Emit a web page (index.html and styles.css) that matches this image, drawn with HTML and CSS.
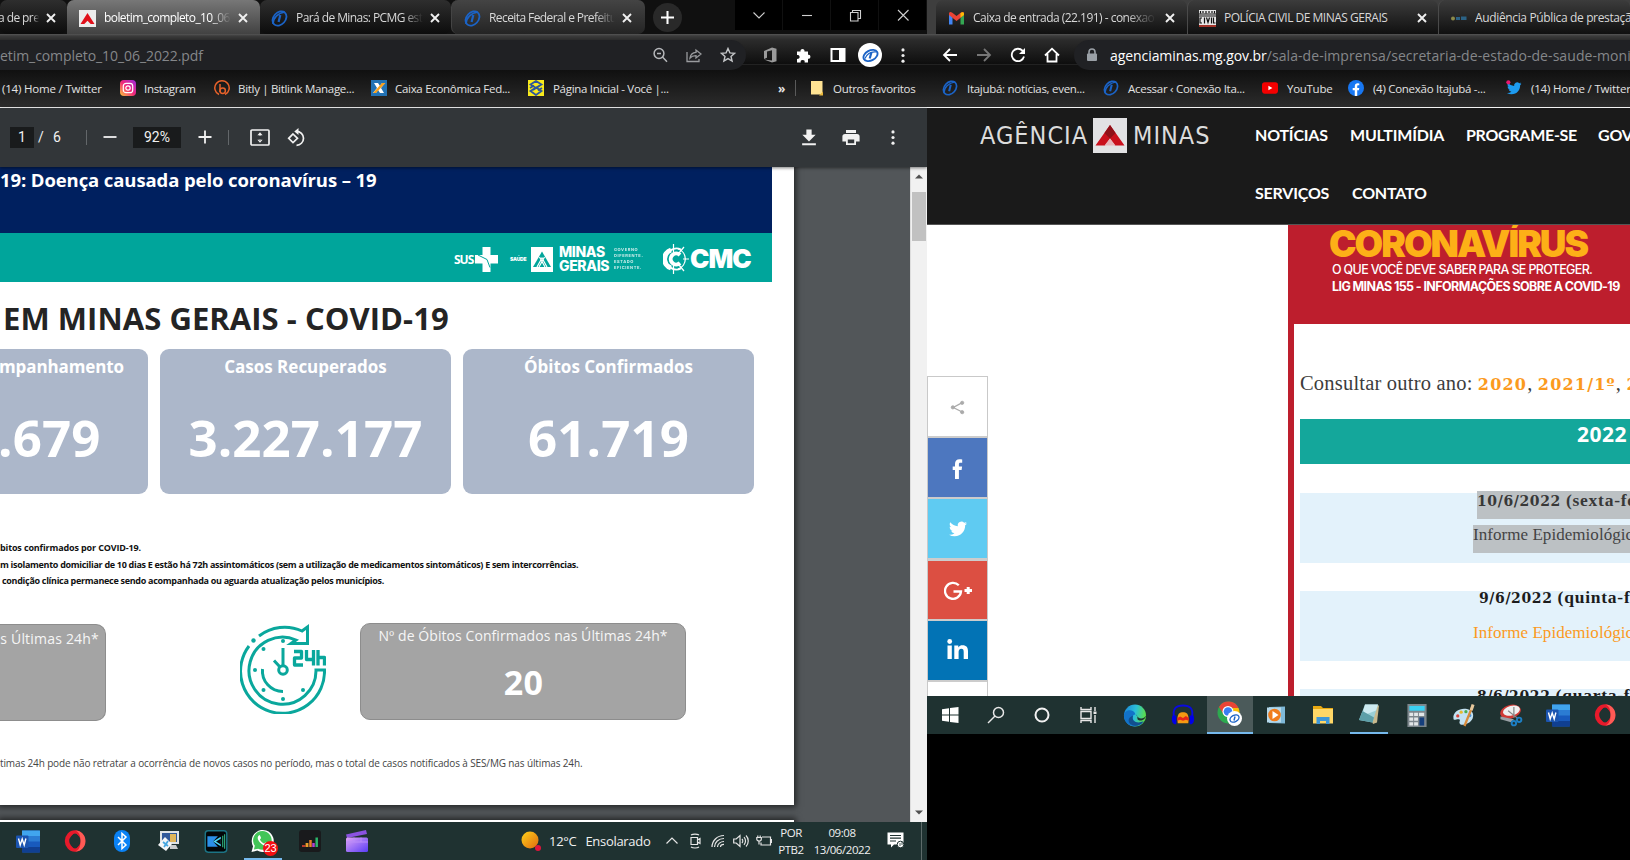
FILE: index.html
```html
<!DOCTYPE html>
<html lang="pt-BR">
<head>
<meta charset="utf-8">
<title>Boletim COVID-19</title>
<link rel="stylesheet" href="styles.css">
</head>
<body>
<svg class="sprite" aria-hidden="true">
  <symbol id="close" viewBox="0 0 10 10"><path d="M1 1l8 8M9 1l-8 8" stroke="currentColor" stroke-width="1.9" fill="none"/></symbol>
  <symbol id="conexao" viewBox="0 0 17 17"><g fill="none" stroke="#1b63c6"><ellipse cx="8.5" cy="8.5" rx="8" ry="6" transform="rotate(-48 8.5 8.5)" stroke-width="1.8"/><path d="M2 14C2 8 7 3 14 2" stroke-width="1.500"/><path d="M9.300 5L7.600 12" stroke-width="2.200"/></g></symbol>
  <symbol id="dots" viewBox="0 0 4 16"><circle cx="2" cy="2" r="1.700"/><circle cx="2" cy="8" r="1.700"/><circle cx="2" cy="14" r="1.700"/></symbol>
  <symbol id="bird" viewBox="0 0 24 24"><path d="M23.950 4.570a10 10 0 0 1-2.820.780 4.950 4.950 0 0 0 2.160-2.730c-.950.560-2 .960-3.120 1.190a4.920 4.920 0 0 0-8.390 4.480C7.690 8.100 4.070 6.130 1.640 3.160a4.820 4.820 0 0 0-.670 2.480c0 1.710.870 3.210 2.190 4.100a4.900 4.900 0 0 1-2.230-.620v.060a4.920 4.920 0 0 0 3.950 4.830 5 5 0 0 1-2.210.080 4.940 4.940 0 0 0 4.600 3.420A9.870 9.870 0 0 1 0 19.540a14 14 0 0 0 7.550 2.210c9.050 0 14-7.500 14-13.990 0-.210 0-.420-.020-.630a9.940 9.940 0 0 0 2.460-2.550z"/></symbol>
  <symbol id="word" viewBox="0 0 24 22"><rect x="6" y="0" width="18" height="22" rx="1" fill="#185abd"/><path d="M6 0h18v6H6z" fill="#41a5ee"/><path d="M6 5.500h18V11H6z" fill="#2b7cd3"/><path d="M6 16.500h18V22H6z" fill="#103f91"/><rect y="5" width="12.500" height="12.500" rx="1" fill="#1b54b0"/><path d="M2.500 8l1.700 6.500L6.200 8.500l2 6L9.900 8" fill="none" stroke="#fff" stroke-width="1.400"/></symbol>
  <symbol id="opera" viewBox="0 0 22 22"><ellipse cx="11" cy="11" rx="8" ry="8.600" fill="none" stroke="#e81a2b" stroke-width="4.400"/><path d="M11 .5c6 0 10.500 4.500 10.500 10.500S17 21.500 11 21.500c4-1 5.500-5 5.500-10.500S15 1.500 11 .5z" fill="#ff5a55"/><ellipse cx="11" cy="11" rx="4.500" ry="7.600" fill="#1f3231"/></symbol>
</svg>

<div class="desktop">
<section class="window left">
  <header class="tabs tabs-left">
    <div class="tab t0"><span class="label fade">a de pre</span><svg class="x"><use href="#close"/></svg></div>
    <div class="tab t1 active">
      <svg class="i17" viewBox="0 0 17 17"><path d="M0 0h17v17H0z" fill="#ececec"/><path d="M8.500 3L1.500 14h3.800l3.200-3.200 3.200 3.200h3.800z" fill="#e0101a"/></svg>
      <span class="label fade">boletim_completo_10_06</span><svg class="x"><use href="#close"/></svg></div>
    <div class="tab t2"><svg class="i17"><use href="#conexao"/></svg><span class="label fade">Pará de Minas: PCMG est</span><svg class="x"><use href="#close"/></svg></div>
    <div class="tab t3"><svg class="i17"><use href="#conexao"/></svg><span class="label fade">Receita Federal e Prefeitu</span><svg class="x"><use href="#close"/></svg></div>
    <div class="newtab"><svg viewBox="0 0 14 14"><path d="M7 0v14M0 7h14" stroke="#fff" stroke-width="2.200"/></svg></div>
    <div class="winbtns">
      <i><svg viewBox="0 0 14 14"><path d="M1.500 4.500L7 10l5.500-5.500"/></svg></i>
      <i><svg viewBox="0 0 14 14"><path d="M2 7.500h10"/></svg></i>
      <i><svg viewBox="0 0 14 14"><path d="M2.500 4.500h7.500V13H2.500zM4.500 4.500v-2h8v8H10"/></svg></i>
      <i><svg viewBox="0 0 14 14"><path d="M2 2l10.500 10.500M12.500 2L2 12.500"/></svg></i>
    </div>
  </header>
  <div class="toolbar tb-left">
    <div class="omni omni-left"><span class="url">etim_completo_10_06_2022.pdf</span>
      <svg class="oi" viewBox="0 0 16 16"><g fill="none" stroke="#b5b7ba" stroke-width="1.500"><circle cx="7" cy="6.500" r="4.900"/><path d="M10.500 10L15 14.700M5 6.500h4"/></g></svg>
      <svg class="oi" viewBox="0 0 16 16"><g fill="none" stroke="#9a9c9f" stroke-width="1.300"><path d="M1 5v9.500h12V12M4 11c.5-4 3-5.500 6-5.700V3l5 4-5 4V8.700C7.500 8.700 5.500 9.200 4 11z"/></g></svg>
      <svg class="oi" viewBox="0 0 16 16"><path d="M8 1.500l1.900 4.400 4.700.4-3.600 3.100 1.100 4.700L8 11.600l-4.100 2.500L5 9.400 1.400 6.300l4.700-.4z" fill="none" stroke="#c4c6c8" stroke-width="1.400"/></svg>
    </div>
    <div class="ext">
      <svg viewBox="0 0 16 16"><path d="M10 .5l4.500 1.300v12.400L10 15.500 2 12.600l8 .9V3.300L5 4.500v6.200L2 12V4z" fill="#9a9a9a"/></svg>
      <svg viewBox="0 0 16 16"><path d="M1 4.500h3.600a2 2 0 1 1 3.800 0H12v3.300a2 2 0 1 1 0 3.900V15.500H8.600a2 2 0 1 0-3.900 0H1V11.800a2 2 0 1 0 0-3.800z" fill="#fff"/></svg>
      <svg viewBox="0 0 16 16"><path d="M.5 1h15v14H.5zM2.500 3v10H9V3z" fill="#fff" fill-rule="evenodd"/></svg>
      <span class="avatar"><svg viewBox="0 0 17 17"><g fill="none" stroke="#1b63c6"><ellipse cx="8.500" cy="8.500" rx="7.500" ry="5" transform="rotate(-28 8.500 8.500)" stroke-width="1.900"/><path d="M9.400 5.500l-1.700 6" stroke-width="2.200"/><path d="M3 11.500C5 7 9 4.500 14 5" stroke-width="1.200"/></g></svg></span>
      <svg class="kebab" fill="#eee"><use href="#dots"/></svg>
    </div>
  </div>
  <nav class="marks marks-left">
    <span class="first">(14) Home / Twitter</span>
    <svg viewBox="0 0 16 16"><defs><linearGradient id="ig" x1="1" y1="0" x2="0" y2="1"><stop offset="0" stop-color="#9b2be0"/><stop offset=".5" stop-color="#f0267a"/><stop offset="1" stop-color="#ffc83a"/></linearGradient></defs><rect width="16" height="16" rx="4" fill="url(#ig)"/><rect x="3.300" y="3.300" width="9.400" height="9.400" rx="2.800" fill="none" stroke="#fff" stroke-width="1.200"/><circle cx="8" cy="8" r="2.200" fill="none" stroke="#fff" stroke-width="1.200"/></svg>
    <span>Instagram</span>
    <svg viewBox="0 0 16 16"><g fill="none" stroke="#e8622a" stroke-width="1.500"><path d="M5 14.500A7.200 7.200 0 1 1 11 14.500"/><path d="M6 4v8"/><circle cx="8.700" cy="10.800" r="2.700"/></g></svg>
    <span>Bitly | Bitlink Manage...</span>
    <svg viewBox="0 0 16 16"><path d="M0 0h16v16H0z" fill="#2272b4"/><path d="M3 3h4l2 3 2-3h3l-4 5 3 5h-4L7 10l-2 3H2l4-5z" fill="#fff"/><path d="M11 3h3.500L5 13H2z" fill="#f5a01e"/></svg>
    <span>Caixa Econômica Fed...</span>
    <svg viewBox="0 0 16 16"><path d="M0 0h16v16H0z" fill="#f8ea1c"/><path d="M8 1l5.500 3.500L8 8 2.500 4.500zM2.500 11L8 7.500l5.500 3.500L8 15z" fill="none" stroke="#2c559c" stroke-width="1.800"/><path d="M2 8l4-2.500M14 8l-4 2.500M5 10l6-4" stroke="#2c559c" stroke-width="1.800"/></svg>
    <span>Página Inicial - Você |...</span>
    <b>»</b>
    <i class="sep"></i>
    <svg viewBox="0 0 14 16"><path d="M1 1h11.500v13.500H1z" fill="#ffe393"/><path d="M9 15.500l4-4v4z" fill="#e8b73c"/></svg>
    <span>Outros favoritos</span>
  </nav>

  <div class="pdfbar">
    <span class="box">1</span><span>/</span><span>6</span><i class="sep"></i>
    <svg viewBox="0 0 16 16"><path d="M1.500 8h13" stroke="#f1f1f1" stroke-width="1.800"/></svg>
    <span class="box zoomval">92%</span>
    <svg viewBox="0 0 16 16"><path d="M1.500 8h13M8 1.500v13" stroke="#f1f1f1" stroke-width="1.800"/></svg>
    <i class="sep"></i>
    <svg viewBox="0 0 20 18"><rect x="1" y="1.500" width="18" height="15" rx="1" fill="none" stroke="#f1f1f1" stroke-width="1.700"/><path d="M10 3.800l2.600 3H7.400zM10 14.200l2.600-3H7.400zM9.400 6h1.200v1.300H9.400zM9.400 10.700h1.200V12H9.400z" fill="#f1f1f1"/></svg>
    <svg viewBox="0 0 19 19"><g fill="none" stroke="#f1f1f1" stroke-width="1.700"><path d="M5.500 6L10 10.300 5.500 14.600 1.200 10.300z"/><path d="M9 3.300a7 7 0 1 1 0 14"/></g><path d="M6.800 3.400L11 0v7z" fill="#f1f1f1"/></svg>
    <em></em>
    <svg viewBox="0 0 16 18"><path d="M5.500 1.500h5v5h3.800L8 12.700 1.700 6.500h3.800zM1.500 14.500h13v1.800h-13z" fill="#f1f1f1"/></svg>
    <svg viewBox="0 0 18 18"><path d="M4 1.500h10v3H4zM3 5.500h12a2.600 2.600 0 0 1 2.600 2.600v5H14v3.400H4v-3.400H.4v-5A2.600 2.600 0 0 1 3 5.500zM5.800 11v3.800h6.400V11z" fill="#f1f1f1" fill-rule="evenodd"/></svg>
    <svg class="kebab" fill="#f1f1f1"><use href="#dots"/></svg>
  </div>

  <div class="viewer">
    <div class="pages">
      <article class="page">
        <div class="navy">19: Doença causada pelo coronavírus – 19</div>
        <div class="teal">
          <span class="sus">SUS</span>
          <svg class="cross" viewBox="0 0 23 25"><path d="M7.500 0h8v8H23v8.500h-7.500V25h-8v-8.500H0V8h7.500z" fill="#fff"/><path d="M3 8l9 4.500 3 8" fill="none" stroke="#00a59b"/></svg>
          <span class="saude">SAÚDE</span>
          <svg class="mg" viewBox="0 0 22 25"><path d="M0 0h22v25H0z" fill="#fff"/><path d="M11 4.500L2 20h18z" fill="#00a59b"/><path d="M6 20l5-9 5 9M8.500 10l5.500 10M13.500 10L8 20" fill="none" stroke="#fff" stroke-width="1.200"/></svg>
          <span class="minas">MINAS<br>GERAIS</span>
          <span class="gov"><span>GOVERNO</span><span>DIFERENTE.</span><span>ESTADO</span><span>EFICIENTE.</span></span>
          <svg class="wheel" viewBox="0 0 26 30"><g fill="none" stroke="#fff"><path d="M18 5.500A10.500 10.500 0 1 0 18 24.500" stroke-width="1.800"/><path d="M8 6a9.500 9.500 0 0 0 0 18" stroke-width="5"/><path d="M17 11a5.500 5.500 0 1 0 0 8" stroke-width="4"/><path d="M10.500 0v8M10.500 22v8M20 15h6M16 9l5-6M16 21l5 6" stroke-width="1.200"/><path d="M15 5a10.500 10.500 0 0 1 0 20" stroke-width="1.300"/></g></svg>
          <span class="cmc">CMC</span>
        </div>
        <h1>EM MINAS GERAIS - COVID-19</h1>
        <div class="cards">
          <div class="card c1"><span>mpanhamento</span><strong>.679</strong></div>
          <div class="card"><span>Casos Recuperados</span><strong>3.227.177</strong></div>
          <div class="card"><span>Óbitos Confirmados</span><strong>61.719</strong></div>
        </div>
        <div class="notes">
          <p class="note1">bitos confirmados por COVID-19.</p>
          <p>m isolamento domiciliar de 10 dias E estão há 72h assintomáticos (sem a utilização de medicamentos sintomáticos) E sem intercorrências.</p>
          <p class="note3">condição clínica permanece sendo acompanhada ou aguarda atualização pelos municípios.</p>
        </div>
        <div class="daily">
          <div class="grey g1"><span>s Últimas 24h*</span></div>
          <svg class="clock" viewBox="0 0 86 90"><g fill="none" stroke="#0aa79c" stroke-width="3">
            <path d="M9 22A42 42 0 1 0 84.500 46H76A33.500 33.500 0 1 1 56 16L51 19.500H67.500V3L62 7A42 42 0 0 0 19 12"/>
            <circle cx="43" cy="46" r="4.300"/><path d="M43 41V24M40 43l-6-6.500M22.500 45A20.500 20.500 0 0 0 43 67.500"/></g>
            <g fill="#0aa79c"><circle cx="13.500" cy="16.500" r="2.200"/><circle cx="43" cy="17" r="2"/><circle cx="23.500" cy="25" r="2"/><circle cx="15" cy="46" r="2"/><circle cx="23.500" cy="66" r="2"/><circle cx="43" cy="75" r="2"/><circle cx="63" cy="66" r="2"/></g>
            <g fill="none" stroke="#0aa79c" stroke-width="3.300" stroke-linejoin="round"><path d="M54 27.500h7.500v6.500h-7V41H63M66.500 26V35.500H75M73.500 26V41.500M78 26v15.500M78 33.500h6.500v8"/></g></svg>
          <div class="grey g2"><span>Nº de Óbitos Confirmados nas Últimas 24h*</span><strong>20</strong></div>
        </div>
        <p class="foot">timas 24h pode não retratar a ocorrência de novos casos no período, mas o total de casos notificados à SES/MG nas últimas 24h.</p>
      </article>
      <div class="page next"></div>
    </div>
    <div class="scroll"><svg viewBox="0 0 8 5"><path d="M0 4.500L4 .5l4 4z" fill="#505050"/></svg><i></i><svg viewBox="0 0 8 5"><path d="M0 .5l4 4 4-4z" fill="#505050"/></svg></div>
  </div>

  <footer class="task task-left">
    <i><svg class="w24"><use href="#word"/></svg></i>
    <i><svg class="w22"><use href="#opera"/></svg></i>
    <i><svg class="w22" viewBox="0 0 22 22"><rect x="3" width="16" height="22" rx="8" fill="#0a82f5"/><path d="M7 7l8 8-4 3.500v-15L15 7l-8 8" fill="none" stroke="#fff" stroke-width="1.500"/></svg></i>
    <i><svg class="w22" viewBox="0 0 22 22"><path d="M2 1h19v13H2z" fill="#dfe3e6"/><path d="M4 3h15v9H4z" fill="#31599b"/><path d="M12 4h6v8h-6z" fill="#e0b65a"/><path d="M12 15h6l2 4h-8z" fill="#c9ccce"/><path d="M7 7l7 7-6 7-8-6z" fill="#f4f6f8"/><path d="M5 12l5 4M10 11l-4 6" stroke="#46a6e0" stroke-width="1.800"/></svg></i>
    <i><svg class="w24" viewBox="0 0 24 24"><rect x=".8" y=".8" width="22.400" height="22.400" rx="3" fill="#030608" stroke="#1c7485" stroke-width="1.500"/><path d="M3 6.500h11l-5 5.500 5 5.500H3z" fill="#2b8fe8"/><path d="M9 12l8-5v10z" fill="#4dd5f5"/><path d="M12 12l5-3v6z" fill="#030608"/><path d="M19 6v12M21 4.500v15" stroke="#2fae7c" stroke-width="1.200"/></svg></i>
    <i class="open"><svg class="w24" viewBox="0 0 24 24"><path d="M0 24l1.600-6A11.500 11.500 0 1 1 6 22.500z" fill="#fff"/><path d="M2.500 21.500l1-4A9.700 9.700 0 1 1 7 20.500z" fill="#42c557"/><path d="M8 6.500c-3 2-1 6 2 8.500s6 3.500 7.500 1l-3-2-1.500 1.200c-2-.8-3.500-2.500-4.200-4.200L10 9.500 8.800 6.500z" fill="#fff"/></svg><u>23</u></i>
    <i><svg class="w22" viewBox="0 0 22 22"><rect width="22" height="22" rx="3" fill="#191a1c"/><path d="M3 16h3.500" stroke="#e43" stroke-width="1.500"/><path d="M8 13v4" stroke="#e8a02a" stroke-width="2.800"/><path d="M11.500 10v7" stroke="#e87f2a" stroke-width="2.500"/><path d="M14.500 13v4" stroke="#b13fd0" stroke-width="2.500"/><path d="M17.700 7.500v9.500" stroke="#2cb56a" stroke-width="2.500"/></svg></i>
    <i><svg class="w22" viewBox="0 0 22 22"><defs><linearGradient id="cl" x1="0" y1="0" x2="1" y2="1"><stop offset="0" stop-color="#e0a4f7"/><stop offset="1" stop-color="#5a3df5"/></linearGradient></defs><path d="M0 4.500L20 0l1 4L1 8z" fill="#8a52e0"/><rect y="7.500" width="22" height="14.500" rx="1.500" fill="url(#cl)"/><path d="M0 12h22M8 7.500v4.500M15 7.500v4.500" stroke="#b98cf8"/></svg></i>
    <div class="weather"><svg viewBox="0 0 20 20"><defs><linearGradient id="sun" x1="0" y1="0" x2="1" y2="1"><stop offset="0" stop-color="#ffd11a"/><stop offset="1" stop-color="#e06a10"/></linearGradient></defs><circle cx="9" cy="9" r="8.500" fill="url(#sun)"/><circle cx="17" cy="17" r="3" fill="#e0143c"/></svg><span>12°C</span><span>Ensolarado</span></div>
    <div class="tray">
      <svg viewBox="0 0 16 16"><path d="M2.500 10.500L8 5l5.500 5.500"/></svg>
      <svg viewBox="0 0 16 16"><path d="M4 4.500h6.500v7H4zM10.500 7l2.500-1.500v5L10.500 9M4 2c2-1.300 6-1.300 8 0M4 14c2 1.300 6 1.300 8 0"/></svg>
      <svg viewBox="0 0 16 16"><path d="M2 14C2 8 7 2.500 14 2.500M4.500 14c0-4.500 4-8.500 9.500-8.500M7.500 14c0-3 3-5.500 6.500-5.500M10.500 14c0-1.500 1.500-2.700 3.500-2.700"/></svg>
      <svg viewBox="0 0 16 16"><path d="M.7 6h2.500L7 2.500v11L3.200 10H.7zM9 6c1 1 1 3 0 4M11 4.200c2 2 2 5.600 0 7.600M13 2.500c3 3 3 8 0 11"/></svg>
      <svg viewBox="0 0 16 16"><path d="M6 4h8.500v8H5V9.500M14.500 6.500h1.200v3h-1.200M.8 4.500h4.500v1.700c0 2.400-4.500 2.400-4.500 0zM1.800 2.500v2M4.200 2.500v2M3 8v3.500"/></svg>
    </div>
    <div class="stack lang"><span>POR</span><span>PTB2</span></div>
    <div class="stack clocktxt"><span>09:08</span><span>13/06/2022</span></div>
    <svg class="notif" viewBox="0 0 18 17"><path d="M.5.500h16v12H7l-3 3v-3H.500z" fill="#fff"/><path d="M3 3.500h11M3 6.200h11M3 9h6" stroke="#1f3231" stroke-width="1.200"/><circle cx="13.500" cy="12.500" r="3.300" fill="#fff" stroke="#1f3231"/><path d="M13 11v3M15 10v3" stroke="#1f3231" stroke-width=".8"/></svg>
    <i class="peek"></i>
  </footer>
</section>

<section class="window right">
  <header class="tabs tabs-right">
    <div class="tab r1">
      <svg class="i17" viewBox="0 0 17 17"><path d="M1 3.500v11h3.500V7z" fill="#4285f4"/><path d="M16 3.500v11h-3.500V7z" fill="#34a853"/><path d="M1 3.500C1 2 2.500 1.500 4 2.500L8.500 6 13 2.500c1.500-1 3-.5 3 1V5l-7.500 6L1 5z" fill="#ea4335"/><path d="M12.500 3v4.600L16 5V3.500C16 2 14 1.700 12.500 3z" fill="#fbbc04"/></svg>
      <span class="label fade">Caixa de entrada (22.191) - conexao</span><svg class="x"><use href="#close"/></svg></div>
    <div class="tab r2">
      <svg class="i17" viewBox="0 0 17 17"><path d="M0 0h17v15H0z" fill="#e8e8e8"/><path d="M0 4h17M0 6h17" stroke="#111"/><path d="M1.500 1v2.500M4 1v2M7 1v2.500M10 1v2M13 1v2M15.500 1v2.500M3 8h-2v5h2M5.500 7.500v6M7.500 7.500l1.500 5 1.500-5M12.500 7.500v6M14.500 7.500v5.500h2" stroke="#111" stroke-width="1.200" fill="none"/><path d="M0 15h17v2H0z" fill="#a3352b"/></svg>
      <span class="label">POLÍCIA CIVIL DE MINAS GERAIS</span><svg class="x"><use href="#close"/></svg></div>
    <div class="tab r3">
      <svg class="i17" viewBox="0 0 17 17"><circle cx="3" cy="8.500" r="2" fill="#8b8a4a"/><path d="M6 7h4v3H6zM11 6.500h5.500V10H11z" fill="#2b6285"/></svg>
      <span class="label">Audiência Pública de prestação</span></div>
  </header>
  <div class="toolbar tb-right">
    <svg viewBox="0 0 16 16"><path d="M15 8H2.500M8 2L2 8l6 6" stroke="#fff"/></svg>
    <svg viewBox="0 0 16 16"><path d="M1 8h12.500M8 2l6 6-6 6" stroke="#777"/></svg>
    <svg viewBox="0 0 16 16"><path d="M14 9.500A6.200 6.200 0 1 1 12.500 3.700L14.500 6" stroke="#fff"/><path d="M15 1v6H9z" fill="#fff" stroke="none"/></svg>
    <svg viewBox="0 0 16 16"><path d="M1 8.500L8 1.700l7 6.800M3.500 7v7.500h9V7" stroke="#fff"/></svg>
    <div class="omni omni-right"><svg viewBox="0 0 12 14"><path d="M3 6V4a3 3 0 0 1 6 0v2" fill="none" stroke="#9aa0a6" stroke-width="1.600"/><rect x="1" y="5.500" width="10" height="7.500" rx="1" fill="#9aa0a6"/></svg><span class="url"><b>agenciaminas.mg.gov.br</b>/sala-de-imprensa/secretaria-de-estado-de-saude-moni</span></div>
  </div>
  <nav class="marks marks-right">
    <svg><use href="#conexao"/></svg><span>Itajubá: notícias, even...</span>
    <svg><use href="#conexao"/></svg><span>Acessar ‹ Conexão Ita...</span>
    <svg viewBox="0 0 17 17"><rect y="2.500" width="17" height="12" rx="3" fill="#f40000"/><path d="M6.800 6v5l4.200-2.500z" fill="#fff"/></svg><span>YouTube</span>
    <svg viewBox="0 0 17 17"><circle cx="8.500" cy="8.500" r="8.500" fill="#1877f2"/><path d="M7.200 17v-6H5V8.600h2.200V6.800C7.200 4.600 8.400 3.500 10.300 3.500l1.700.1v2h-1c-1 0-1.200.6-1.200 1.300v1.700h2.200L11.600 11H9.800v6z" fill="#fff"/></svg><span>(4) Conexão Itajubá -...</span>
    <svg viewBox="0 0 17 17"><g fill="#1d9bf0" transform="translate(1 1) scale(.65)"><use href="#bird" width="24" height="24"/></g><circle cx="2.500" cy="2.500" r="2.200" fill="#e8186e"/></svg><span class="last">(14) Home / Twitter</span>
  </nav>
  <div class="site">
    <header class="sitehead">
      <div class="logo"><span class="ag">AGÊNCIA</span><svg viewBox="0 0 34 35"><path d="M0 0h34v35H0z" fill="#e2e2e4"/><path d="M17 7L2.500 27.500H12l5-7 5 7h9.500z" fill="#c90f1c"/><path d="M17 7l-5.500 8 5.500 5.500 5.500-5.500z" fill="#8f1018"/><path d="M17 20.500l-5.500 7h11z" fill="#e6b4ba"/></svg><span class="mi">MINAS</span></div>
      <nav><div><span class="n1">NOTÍCIAS</span><span class="n2">MULTIMÍDIA</span><span class="n3">PROGRAME-SE</span><span>GOVERNO</span></div><div><span class="n4">SERVIÇOS</span><span>CONTATO</span></div></nav>
    </header>
    <div class="sitebody">
      <aside class="share">
        <i class="s0"><svg viewBox="0 0 20 20"><g fill="#aaa" stroke="#aaa"><path d="M15 4.500L5 10l10 5" fill="none" stroke-width="1.500"/><circle cx="15.500" cy="4.500" r="1.900"/><circle cx="4.500" cy="9.800" r="1.900"/><circle cx="15.500" cy="15.500" r="1.900"/></g></svg></i>
        <i class="s1"><svg viewBox="0 0 20 20"><path d="M7 20v-9H4.700V7.500H7V5c0-3.200 1.600-4.800 4.500-4.800.9 0 2 .1 2.700.2v3.300h-1.700c-1.400 0-1.600.7-1.600 1.600v2.200h3.200l-.5 3.500h-2.700v9z" fill="#fff"/></svg></i>
        <i class="s2"><svg fill="#fff"><use href="#bird"/></svg></i>
        <i class="s3"><svg class="gp" viewBox="0 0 28 20"><g fill="none" stroke="#fff"><path d="M14.800 4.300A8 8 0 1 0 17 10.500H9.500" stroke-width="2.300"/><path d="M20.500 9.500h7.500M24.200 6v7" stroke-width="3"/></g></svg></i>
        <i class="s4"><svg class="in" viewBox="0 0 22 20"><path d="M.5 6.500h4.300V20H.5zM7.300 6.500h4v1.900c1-1.600 2.500-2.200 4.200-2.200 4 0 5.500 2.300 5.500 6V20h-4.300v-7c0-2-.6-3.200-2.400-3.200-1.900 0-2.700 1.400-2.700 3.200v7H7.300z" fill="#fff"/><circle cx="2.700" cy="2.500" r="2.400" fill="#fff"/></svg></i>
        <i class="s5"></i>
      </aside>
      <main class="covid">
        <div class="banner"><h2>CORONAVÍRUS</h2><p>O QUE VOCÊ DEVE SABER PARA SE PROTEGER.</p><p class="bold">LIG MINAS 155 - INFORMAÇÕES SOBRE A COVID-19</p></div>
        <div class="list">
          <p class="years">Consultar outro ano: <b>2020</b>, <b>2021/1º</b>, <b>2021/2º</b></p>
          <div class="year">2022</div>
          <div class="row"><strong class="sel"><span>10/6/2022</span> (sexta-feira)</strong><a class="sel">Informe Epidemiológico</a></div>
          <div class="row r9"><strong><span>9/6/2022</span> (quinta-feira)</strong><a>Informe Epidemiológico</a></div>
          <div class="row"><strong><span>8/6/2022</span> (quarta-feira)</strong></div>
        </div>
      </main>
    </div>
  </div>
  <footer class="task task-right">
    <i><svg viewBox="0 0 20 20"><path d="M2 4.300l7-1v6.300H2zM10 3.100l8.500-1.200v7.700H10zM2 10.500h7v6.300l-7-1zM10 10.500h8.500V18L10 16.900z" fill="#fff"/></svg></i>
    <i><svg viewBox="0 0 20 20"><g fill="none" stroke="#e8e8e8" stroke-width="1.500"><circle cx="12.500" cy="7.500" r="5"/><path d="M9 11l-7 7"/></g></svg></i>
    <i><svg viewBox="0 0 20 20"><circle cx="10" cy="10" r="6.500" fill="none" stroke="#f2f2f2" stroke-width="2"/></svg></i>
    <i><svg viewBox="0 0 20 20"><g fill="none" stroke="#e8e8e8" stroke-width="1.400"><path d="M3 6.500h10v7H3zM3 2v2.500h10V2M3 18v-2.500h10V18M17 2v4M17 10v8"/></g><path d="M15.500 6.500h3v2.500h-3z" fill="#e8e8e8"/></svg></i>
    <i><svg class="w24" viewBox="0 0 24 24"><defs><linearGradient id="ed" x1="0" y1=".3" x2="1" y2=".5"><stop offset="0" stop-color="#1c8ad8"/><stop offset=".5" stop-color="#2bbfd8"/><stop offset="1" stop-color="#5ee03f"/></linearGradient></defs><circle cx="12" cy="12" r="11.500" fill="url(#ed)"/><path d="M.5 12c0-6 10-8 12-1-3 0-4 3-3 6 2 5 9 4 12 1-5 8-21 7-21-6z" fill="#1272c8"/><path d="M10 12c-2 6 4 9 11 6-3 4-8 6-12 4-5-2-5-8 1-10z" fill="#124f8f"/><path d="M13 11c3 2 0 5 3 6s7-1 7.500-5c-1 2-3 3-5 3s-4-1-5.500-4z" fill="#1f3231"/></svg></i>
    <i><svg class="w24" viewBox="0 0 24 24"><path d="M3 15C0 4 6 1.500 12 1.500S24 4 21 15" fill="none" stroke="#0a0ae0" stroke-width="2"/><path d="M1 12h4v9H3c-3-1-3-6-2-9zM23 12h-4v9h2c3-1 3-6 2-9z" fill="#0000e6"/><path d="M6.500 20C5 9 9 8.500 12 8.500S19 9 17.500 20z" fill="#f59a12"/><path d="M6 14.500l3-1.500 3 1.500 3-2 3 2v3l-3-1-3 1-3-1-3 1z" fill="#e5261a"/></svg></i>
    <i class="on"><svg class="w26" viewBox="0 0 26 26"><circle cx="11.500" cy="11.500" r="11" fill="#2da94f"/><path d="M2 6a11 11 0 0 1 19.500 1H11.500L7 14z" fill="#ea4335"/><path d="M21.500 7a11 11 0 0 1-8.500 15.500l4-10-1.500-5.500z" fill="#fbbc04"/><circle cx="11" cy="10.500" r="5.500" fill="#fff"/><circle cx="11" cy="10.500" r="4.300" fill="#3a7ef2"/><circle cx="17.500" cy="17.500" r="7.500" fill="#fff"/><ellipse cx="17.500" cy="17.500" rx="4.800" ry="3.200" transform="rotate(-28 17.500 17.500)" fill="none" stroke="#1b63c6" stroke-width="1.400"/><path d="M18 15.500l-1 4" stroke="#1b63c6" stroke-width="1.400"/></svg></i>
    <i><svg viewBox="0 0 20 20"><path d="M3 2l16-.5v17L3 18z" fill="#7fb9d8"/><path d="M1 2.500h14v15H1z" fill="#b5d8ea"/><circle cx="8.500" cy="10" r="6.300" fill="#f07c1c"/><path d="M6.500 6v8l6-4z" fill="#fff"/></svg></i>
    <i><svg class="w22" viewBox="0 0 22 22"><path d="M1 2h8l2 2h10v5H1z" fill="#e8a912"/><path d="M1 5h20v14.500H1z" fill="#ffd767"/><path d="M4.500 20v-7h13v7H14v-3H8v3z" fill="#3f97d8"/></svg></i>
    <i class="open"><svg class="w22" viewBox="0 0 22 22"><path d="M8 2l13 .5-2 17L15 21z" fill="#c9b98d"/><path d="M7 1.500h13l-5.500 18L1 17z" fill="#9bd0d6"/><path d="M7 1.500h13l-2 6L4 13z" fill="#cdeaf0"/><path d="M4.500 8L1 17l13.500 2.500 1.500-5z" fill="#5d9fa8"/></svg></i>
    <i><svg class="w24" viewBox="0 0 20 24"><path d="M0 0h20v24H0z" fill="#7c868c"/><path d="M2 2h16v5H2z" fill="#3ad0f2"/><g fill="#e2e6e8"><path d="M2 9h4v3.500H2zM7 9h4v3.500H7zM12 9h5.500v3.500H12zM2 14h4v3.500H2zM7 14h4v3.500H7zM2 19h4v3.500H2zM7 19h4v3.500H7z"/></g><path d="M12.500 14h5v8.500h-5z" fill="#163f7c"/></svg></i>
    <i><svg class="w24" viewBox="0 0 24 24"><path d="M1 15C0 8 8 4 14 5s9 5 7 10-10 8-13 6c-2-2 1-4-1-5s-6 2-6-1z" fill="#c4e2f2"/><circle cx="5.500" cy="12.500" r="1.700" fill="#d9453c"/><circle cx="9" cy="8.500" r="1.700" fill="#e8b92e"/><circle cx="14" cy="8" r="1.700" fill="#4cae4f"/><circle cx="18" cy="12" r="1.700" fill="#4a90d9"/><path d="M21 2L12.500 23" stroke="#d98b3a" stroke-width="2.400"/><path d="M18 6l2-6 3 1-2 6z" fill="#e5c79c"/></svg></i>
    <i><svg class="w24" viewBox="0 0 24 24"><ellipse cx="11.500" cy="8" rx="11" ry="7" transform="rotate(-15 11.500 8)" fill="#d03a36"/><ellipse cx="12.500" cy="7" rx="9" ry="5" transform="rotate(-15 12.500 7)" fill="#f0f0f0"/><path d="M1 13l14 3-3 3-11-3z" fill="#9aa1a6"/><path d="M9 7l10 8M15 3v11" stroke="#888" stroke-width="1.300"/><g fill="none" stroke="#1d7fc4" stroke-width="2"><circle cx="15" cy="20" r="2.300"/><circle cx="20.500" cy="16.500" r="2.300"/></g></svg></i>
    <i><svg class="w24"><use href="#word"/></svg></i>
    <i><svg class="w22"><use href="#opera"/></svg></i>
  </footer>
</section>
</div>
</body>
</html>
```
FILE: styles.css
```css
* { box-sizing: border-box; }
body { margin: 0; background: #000; font-family: "Open Sans", "Noto Sans", sans-serif; }
h1, h2, p { margin: 0; }
i, em, u { font-style: normal; text-decoration: none; }
svg { display: block; flex: none; }
span, strong, b { white-space: nowrap; }
.sprite { width: 0; height: 0; position: absolute; }
.desktop { display: grid; grid-template-columns: 927px 703px; width: 1630px; height: 860px; overflow: hidden; }
.window { height: 860px; display: flex; flex-direction: column; overflow: hidden; min-width: 0; }

/* tab strips */
.tabs { height: 34px; flex: none; display: flex; background: #101010; }
.tab { display: flex; align-items: center; height: 34px; padding: 2px 0 0; color: #d9d9d9; font-size: 12px; letter-spacing: -.58px; background: linear-gradient(#2e2e2e, #0c0c0c); border-radius: 7px; }
.tab .label { flex: 1; margin-left: 8px; overflow: hidden; color: #d8d8d8; line-height: 20px; }
.fade { -webkit-mask-image: linear-gradient(90deg, #000 84%, transparent); mask-image: linear-gradient(90deg, #000 84%, transparent); }
.i17 { width: 17px; height: 17px; }
.x { width: 10px; height: 10px; color: #f0f0f0; }
.t0 { width: 67px; }
.tab.t0 { padding-right: 11px; }
.tab.t0 .label { margin-left: -2px; margin-right: 7px; }
.tab.active { background: linear-gradient(#777, #424242); border-radius: 7px 7px 0 0; color: #fff; }
.tab.active .label { color: #fff; }
.t1 .label, .t2 .label, .t3 .label { margin-right: 7px; }
.tab.t1 { width: 193px; padding-left: 12px; padding-right: 12px; }
.tab.t2 { width: 191px; padding-left: 11px; padding-right: 11px; }
.tab.t3 { width: 194px; padding-left: 12px; padding-right: 13px; border-left: 1px solid #444; background: linear-gradient(#444, #242424); }
.newtab { width: 29px; height: 29px; margin: 3px 0 0 8px; border-radius: 50%; background: #292929; display: grid; place-items: center; }
.newtab svg { width: 13px; height: 13px; }
.winbtns { display: flex; gap: 1px; margin-left: auto; height: 30px; padding-right: 1px; }
.winbtns i { width: 47px; background: #000; display: grid; place-items: center; }
.winbtns svg { width: 14px; height: 14px; fill: none; stroke: #cfcfcf; stroke-width: 1.1; }
.tabs-right { padding-left: 9px; background: #3e3e3e; }
.tabs-right .tab { background: linear-gradient(#3c3c3c, #101010); border-radius: 7px 7px 0 0; }
.r1 .label { margin-right: 9px; }
.tab.r1 { width: 251px; padding-left: 12px; padding-right: 12px; letter-spacing: -.52px; }
.tab.r2 { width: 251px; border-left: 1px solid #4a4a4a; padding-left: 11px; padding-right: 11px; letter-spacing: -.5px; }
.tab.r3 { flex: 1; min-width: 0; border-left: 1px solid #4a4a4a; padding-left: 11px; }
.tab.r3 .label { letter-spacing: -.36px; }

/* toolbars */
.toolbar { height: 36px; flex: none; display: flex; align-items: flex-end; background: linear-gradient(#555 0, #3b3b3b 2px, #2b2b2b 6px, #0e0e0e 30px, #333 30px, #111 31px, #111); }
.omni { height: 30px; background: #202124; display: flex; align-items: center; }
.omni-left { width: 746px; border-radius: 0 15px 15px 0; padding-right: 10px; }
.url { color: #85878a; font-size: 14px; letter-spacing: -.07px; }
.omni-left .url { flex: 1; }
.oi { width: 16px; height: 16px; margin-left: 18px; }
.ext { flex: 1; height: 30px; display: flex; align-items: center; padding-left: 16px; }
.ext svg { width: 16px; height: 16px; margin-right: 18px; }
.avatar { width: 24px; height: 24px; border-radius: 50%; background: #fff; display: grid; place-items: center; margin: 0 19px 0 -6px; }
.avatar svg { width: 17px; height: 17px; margin: 0; }
.ext svg.kebab { width: 4px; height: 15px; margin: 0; }
.tb-right { padding-left: 15px; }
.tb-right > svg { width: 16px; height: 16px; margin: 0 18px 7px 0; fill: none; stroke-width: 1.8; }
.omni-right { flex: 1; min-width: 0; margin-left: -4px; border-radius: 15px 0 0 15px; padding-left: 12px; overflow: hidden; }
.omni-right svg { width: 12px; height: 14px; margin-right: 12px; }
.omni-right .url { letter-spacing: .07px; }
.omni-right b { color: #fff; font-weight: 400; letter-spacing: -.07px; }

/* bookmark bars */
.marks { height: 38px; flex: none; display: grid; align-items: center; padding-bottom: 1px; background: linear-gradient(#101010, #2c2c2c); border-bottom: 1.500px solid #f4f4f4; color: #e2e2e2; font-size: 11.500px; letter-spacing: -.28px; overflow: hidden; }
.marks svg { width: 16px; height: 16px; }
.marks b { font-size: 12px; }
.marks-left { grid-template-columns: 118px 24px 70px 24px 133px 24px 133px 25px 225px 21px 10px 24px 1fr; padding-left: 2px; letter-spacing: -.3px; }
.marks .first, .marks .last { letter-spacing: -.18px; }
.marks-right { grid-template-columns: 25px 136px 25px 134px 25px 61px 25px 133px 25px 1fr; padding-left: 15px; }
.marks .sep { width: 1px; height: 16px; background: #5a5a5a; margin-left: -4px; }

/* pdf toolbar */
.pdfbar { height: 59px; flex: none; display: grid; align-items: center; justify-content: start; justify-items: center; grid-template-columns: 24px 14px 18px 40px 8px 86px 9px 38px 25px 50px 470px 34px 50px 34px; padding: 0 0 1px 10px; background: #323639; color: #f1f1f1; font-size: 14px; font-family: Roboto, sans-serif; box-shadow: 0 1px 3px rgba(0,0,0,.5); position: relative; z-index: 1; }
.pdfbar svg { width: 16px; height: 16px; }
.pdfbar svg:nth-of-type(3), .pdfbar svg:nth-of-type(4) { width: 20px; height: 19px; }
.pdfbar svg:nth-of-type(5), .pdfbar svg:nth-of-type(6) { width: 18px; height: 19px; }
.pdfbar svg.kebab { width: 4px; height: 15px; }
.pdfbar .sep { width: 1px; height: 15px; background: #63676a; }
.box { width: 24px; height: 21px; line-height: 21px; text-align: center; background: #191b1c; }
.zoomval { width: 48px; }

/* pdf page */
.viewer { height: 655px; flex: none; display: flex; background: #525659; overflow: hidden; }
.pages { width: 910px; overflow: hidden; }
.page { width: 794px; height: 638px; background: #fff; box-shadow: 0 0 6px 2px rgba(0,0,0,.6); overflow: hidden; }
.next { margin-top: 15px; height: 20px; }
.navy { width: 772px; height: 66px; background: #00205f; color: #fff; font-weight: 700; font-size: 18.500px; letter-spacing: -.1px; line-height: 26px; white-space: nowrap; }
.teal { width: 772px; height: 49px; background: #00a59b; color: #fff; display: flex; align-items: center; padding: 3px 0 0 454px; }
.sus { width: 21px; font-size: 12px; font-weight: 700; letter-spacing: -1px; }
.cross { width: 23px; height: 25px; }
.saude { width: 33px; padding-left: 12px; font: 900 5px Inter, sans-serif; letter-spacing: -.2px; }
.mg { width: 22px; height: 25px; }
.minas { width: 59px; padding-left: 6px; font: 800 14px/14px Inter, sans-serif; letter-spacing: -.35px; }
.gov { width: 51px; padding-left: 2px; display: flex; flex-direction: column; opacity: .8; }
.gov span { font: 700 4px/6.200px Inter, sans-serif; letter-spacing: .6px; }
.wheel { width: 26px; height: 30px; }
.cmc { font: 900 26px/30px Inter, sans-serif; letter-spacing: -1px; margin-left: 1px; }
h1 { height: 67px; padding: 5px 0 0 3px; font-size: 31px; line-height: 62px; color: #242424; white-space: nowrap; letter-spacing: .06px; }
.cards { display: grid; grid-template-columns: 148px 291px 291px; column-gap: 12px; height: 145px; }
.card { background: #acb7ca; border-radius: 9px; color: #fff; text-align: center; display: flex; flex-direction: column; overflow: hidden; }
.card span { font-size: 17px; font-weight: 700; line-height: 36px; letter-spacing: 0; }
.card strong { font-size: 51px; line-height: 105px; letter-spacing: .1px; }
.c1 { border-radius: 0 9px 9px 0; text-align: left; }
.c1 span { margin-left: -1px; letter-spacing: -.1px; }
.c1 strong { margin-left: -2px; }
.notes { padding-top: 46px; font-size: 9px; font-weight: 700; line-height: 16.500px; color: #111; letter-spacing: -.3px; white-space: nowrap; height: 129px; }
.note1 { letter-spacing: -.14px; }
.note3 { padding-left: 2px; }
.daily { display: flex; height: 97px; }
.grey { background: #a4a4a4; border: 1.500px solid #8d8d8d; border-radius: 10px; height: 97px; color: #f6f6f6; display: flex; flex-direction: column; align-items: center; font-size: 14px; letter-spacing: .07px; }
.grey span { line-height: 24px; }
.g1 { width: 106px; border-left: 0; border-radius: 0 10px 10px 0; margin-top: 1px; align-items: flex-end; padding: 2px 6px 0 0; }
.g1 span { letter-spacing: .2px; }
.clock { width: 86px; height: 90px; margin: 1px 34px 0 134px; }
.g2 { width: 326px; }
.g2 strong { font-size: 34px; line-height: 68px; letter-spacing: .3px; color: #fff; padding-left: 1px; }
.foot { margin-top: 34px; font-size: 10px; line-height: 18px; letter-spacing: -.13px; color: #444; white-space: nowrap; }
.scroll { width: 17px; background: #f1f1f1; border-left: 1px solid #ddd; display: flex; flex-direction: column; align-items: center; padding: 7px 0; }
.scroll svg { width: 8px; height: 5px; }
.scroll i { width: 14px; height: 49px; margin: 13px 0 auto; background: #c1c1c1; }

/* taskbars */
.task { height: 38px; flex: none; background: #1f3231; display: flex; color: #f0f0f0; overflow: hidden; }
.task > i { display: grid; place-items: center; height: 38px; width: 47px; position: relative; flex: none; }
.task > i svg { width: 20px; height: 20px; }
.task > i svg.w22 { width: 22px; height: 22px; }
.task > i svg.w24 { width: 24px; height: 23px; }
.task > i svg.w26 { width: 26px; height: 26px; }
.task-left { padding-left: 4px; }
.task > i.open { border-bottom: 2px solid #76b9ed; }
.task-left > i.open { width: 38px; margin: 0 4px 0 5px; }
.open u { position: absolute; left: 19px; top: 19px; width: 15px; height: 15px; border-radius: 50%; background: #f40f12; color: #fff; font: 11px/15px "Liberation Sans", sans-serif; text-align: center; }
.weather { display: flex; align-items: center; margin-left: 141px; font-size: 13px; letter-spacing: -.3px; width: 143px; }
.weather svg { width: 20px; height: 20px; margin-right: 8px; }
.weather span + span { margin-left: 9px; }
.tray { display: flex; align-items: center; gap: 7px; }
.tray svg { width: 16px; height: 16px; fill: none; stroke: #e6e6e6; stroke-width: 1.200; }
.stack { display: flex; flex-direction: column; align-items: center; justify-content: center; font-size: 11.500px; line-height: 17px; letter-spacing: -.45px; padding-bottom: 1px; }
.lang { width: 30px; margin-left: 4px; }
.clocktxt { width: 60px; margin-left: 6px; }
.notif { width: 18px; height: 17px; margin: 10px 0 0 15px; }
.task > i.peek { width: 1px; margin-left: 16px; background: #5d6b6a; }

/* news site */
.site { height: 588px; flex: none; background: #fff; overflow: hidden; }
.sitehead { height: 117px; background: #1a1a1a; display: flex; color: #fff; border-bottom: 1px solid #555; }
.logo { width: 328px; flex: none; height: 55px; display: flex; align-items: center; padding: 0 0 1px 53px; font: 25px "DejaVu Sans Condensed", "DejaVu Sans", sans-serif; font-stretch: condensed; color: #dcdcdc; }
.logo .ag { width: 113px; letter-spacing: 1px; }
.logo .mi { letter-spacing: 1px; }
.logo svg { width: 34px; height: 35px; margin-right: 6px; }
.sitehead nav { font: 700 16px Lato, sans-serif; letter-spacing: -.2px; }
.sitehead nav div { height: 53px; display: flex; align-items: center; }
.sitehead nav div + div { height: 62px; }
.n1 { width: 95px; } .n2 { width: 116px; } .n3 { width: 132px; letter-spacing: -.3px; } .n4 { width: 97px; }
.sitebody { display: flex; height: 471px; }
.share { width: 61px; margin-top: 151px; height: 322px; border: 1px solid #c9c9c9; background: #ccc; flex: none; display: flex; flex-direction: column; gap: 2px; }
.share i { height: 59px; flex: none; display: grid; place-items: center; }
.share svg { width: 20px; height: 20px; }
.share .s2 svg { width: 18px; }
.share .gp { width: 28px; height: 20px; }
.share .in { width: 22px; height: 20px; }
.share .s0 svg { width: 17px; height: 17px; }
.share .s0 { background: #fff; padding-top: 2px; } .share .s1 { background: #4d77bf; padding-top: 2px; } .share .s2 { background: #5fcbf2; }
.share .s3 { background: #dc4f42; margin-top: 1px; height: 58px; padding-top: 2px; } .share .s4 { background: #0273b5; padding-bottom: 4px; } .share .s5 { background: #fff; }
.covid { margin-left: 300px; width: 342px; flex: none; border-left: 6px solid #bd1e2d; overflow: hidden; }
.banner { height: 99px; background: #bd1e2d; padding-left: 35px; color: #fff; overflow: hidden; }
.banner h2 { font: 900 37px/37px Inter, sans-serif; letter-spacing: -2.050px; color: #fdb017; white-space: nowrap; }
.banner p { margin-left: 3px; font: 500 12.500px/16.500px Inter, sans-serif; letter-spacing: -.66px; white-space: nowrap; }
.banner .bold { font-weight: 700; letter-spacing: -.6px; }
.list { padding: 43px 0 0 6px; font-family: "Liberation Serif", serif; color: #3c3c3c; }
.years { font-size: 20.500px; line-height: 32px; letter-spacing: .2px; white-space: nowrap; }
.years b { color: #fb9a1e; font: 700 16px "DejaVu Serif", serif; letter-spacing: 1.200px; }
.year { height: 44.500px; margin: 20px 0 29px; background: #14a79b; color: #fff; font: 700 21px/30px "Open Sans", sans-serif; padding-left: 277px; letter-spacing: .5px; }
.row { height: 70px; margin-bottom: 28px; padding-left: 177px; background: #e3f2fb; white-space: nowrap; display: flow-root; }
.row strong, .row a { display: block; width: 300px; height: 28px; }
.row strong { margin-top: -3px; font-size: 17.500px; line-height: 19px; letter-spacing: .75px; color: #1c1c1c; }
.row strong span { font: 700 14px/19px "DejaVu Serif", serif; letter-spacing: .6px; }
.row a { margin-left: -4px; margin-top: 7px; font-size: 17px; line-height: 20px; letter-spacing: .05px; color: #fb9a1e; }
.row .sel { background: #bcc1c4; color: #383838; margin-top: -2px; }
.row a.sel { color: #444; margin-top: 6px; }
.r9 strong { padding-left: 2px; }
.task-right > i:nth-child(-n+4) { width: 46px; }
.task-right > i:nth-child(5), .task-right > i:nth-child(6) { width: 48px; }
.task-right > i.on { width: 46px; background: #4b5a5a; border-bottom: 2px solid #76b9ed; }
.task-right > i:nth-child(8) { width: 46px; }
.task-right > i.open { width: 38px; margin: 0 5px 0 4px; }
```
